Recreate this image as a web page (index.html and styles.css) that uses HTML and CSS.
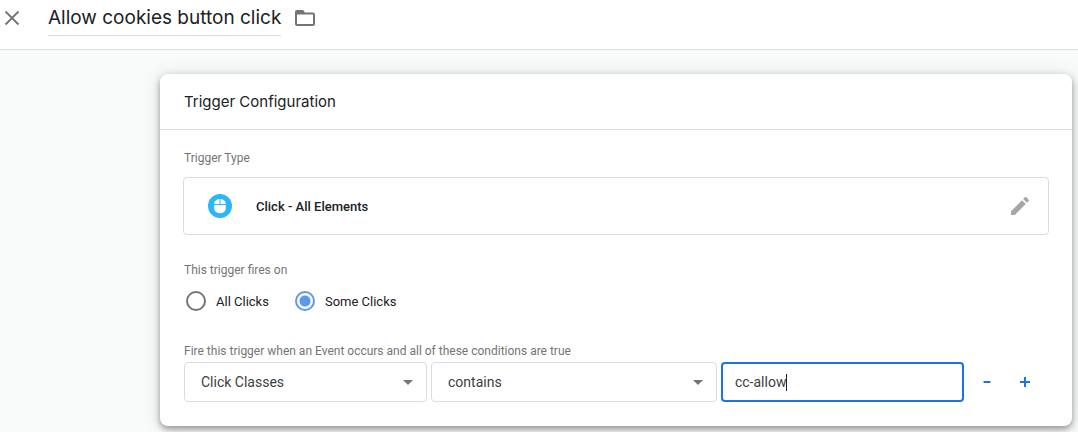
FILE: index.html
```
<!DOCTYPE html>
<html lang="en">
<head>
  <meta charset="UTF-8" />
  <title>Allow cookies button click</title>
  <link rel="stylesheet" href="styles.css">
</head>
<body>

  <header class="topbar">
    <button class="iconButton" aria-label="Close">
      <svg width="16" height="16" viewBox="0 0 16 16"><path d="M1.5 1.5l13 13M14.5 1.5l-13 13" fill="none" stroke="#757575" stroke-width="1.8"/></svg>
    </button>
    <h1>Allow cookies button click</h1>
    <button class="iconButton" aria-label="Folder">
      <svg width="24" height="24" viewBox="0 0 24 24"><path fill="#757575" d="M4 4h6l2 2.500h8c1.100 0 2 .9 2 2V18c0 1.100-.9 2-2 2H4c-1.100 0-2-.9-2-2V6c0-1.100.9-2 2-2zM4 8.500V18h16V8.500z"/></svg>
    </button>
  </header>

  <main>
    <form class="card">
      <h2>Trigger Configuration</h2>
      <div class="cardBody">
        <p class="label">Trigger Type</p>
        <div class="typeBox">
          <svg width="24" height="24" viewBox="0 0 24 24">
            <circle cx="12" cy="12" r="12" fill="#29b6fc"/>
            <path fill="#fff" d="M11.500 5v5H6.200C6.200 7 8.400 5.200 11.500 5zM12.500 5v5h5.300c0-3-2.200-4.800-5.300-5zM6.200 11h11.600v3.200a5 5 0 0 1-5 5h-1.600a5 5 0 0 1-5-5z"/>
          </svg>
          <span class="typeName">Click - All Elements</span>
          <button type="button" class="iconButton" aria-label="Edit">
            <svg width="24" height="24" viewBox="0 0 24 24"><path fill="#a6a6a6" d="M3 17.250V21h3.750L17.810 9.940l-3.750-3.750L3 17.250zM20.710 7.040c.39-.39.39-1.020 0-1.410l-2.340-2.340c-.39-.39-1.020-.39-1.410 0l-1.830 1.830 3.750 3.750 1.830-1.830z"/></svg>
          </button>
        </div>

        <fieldset>
          <legend class="label">This trigger fires on</legend>
          <div class="radios">
            <label><input type="radio" name="fires" value="all">All Clicks</label>
            <label><input type="radio" name="fires" value="some" checked>Some Clicks</label>
          </div>
        </fieldset>

        <p class="label">Fire this trigger when an Event occurs and all of these conditions are true</p>
        <div class="conditions">
          <select aria-label="Variable"><option>Click Classes</option></select>
          <select aria-label="Operator"><option>contains</option></select>
          <div class="valueBox">
            <input type="text" aria-label="Value" value="cc-allow">
            <span class="caret"></span>
          </div>
          <div class="actions">
            <button type="button" aria-label="Remove condition">
              <svg width="10" height="10" viewBox="0 0 10 10"><path d="M1.500 5h7" stroke="#1a73e8" stroke-width="2"/></svg>
            </button>
            <button type="button" aria-label="Add condition">
              <svg width="10" height="10" viewBox="0 0 10 10"><path d="M0 5h10M5 0v10" stroke="#1a73e8" stroke-width="2"/></svg>
            </button>
          </div>
        </div>
      </div>
    </form>
  </main>

</body>
</html>
```
FILE: styles.css
```
* {
  box-sizing: border-box;
}

body {
  margin: 0;
  min-height: 100vh;
  background-color: #f9fafa;
  font-family: Roboto, sans-serif;
  font-size: 13px;
  color: #202124;
}

h1, h2, p {
  margin: 0;
  font-weight: normal;
}

.topbar {
  display: flex;
  align-items: flex-start;
  height: 50px;
  padding: 0 4px;
  background-color: #fff;
  border-bottom: 1px solid #dadce0;
}

.topbar .iconButton {
  height: 36px;
}

h1 {
  height: 36px;
  margin: 0 12px 0 28px;
  border-bottom: 1px solid #dadce0;
  font-family: Inter, sans-serif;
  font-size: 19px;
  line-height: 36px;
}

.iconButton {
  display: flex;
  align-items: center;
  justify-content: center;
  padding: 0;
  border: none;
  background: none;
  cursor: pointer;
}

main {
  padding: 24px 6px 6px 160px;
}

.card {
  background-color: #fff;
  border-radius: 8px;
  box-shadow: 0 3px 6px rgba(60,64,67,0.5), 0 1px 18px rgba(60,64,67,0.15);
}

h2 {
  padding: 0 24px;
  border-bottom: 1px solid #dadce0;
  font-family: Inter, sans-serif;
  font-size: 15px;
  line-height: 55px;
}

.cardBody {
  padding: 20px 24px 24px;
}

.label {
  padding: 0;
  font-size: 12px;
  line-height: 16px;
  color: #757575;
}

.typeBox {
  display: flex;
  align-items: center;
  height: 58px;
  margin: 11px -1px 27px;
  padding: 0 16px 0 24px;
  border: 1px solid #dadce0;
  border-radius: 4px;
}

.typeName {
  flex: 1;
  margin-left: 24px;
  font-weight: 500;
}

fieldset {
  margin: 0;
  padding: 0;
  border: none;
}

.radios {
  display: flex;
  gap: 26px;
  padding: 13px 0 32px 2px;
}

.radios label {
  display: flex;
  align-items: center;
  gap: 10px;
}

.radios input {
  appearance: none;
  width: 20px;
  height: 20px;
  margin: 0;
  border: 2px solid #757575;
  border-radius: 50%;
}

.radios input:checked {
  border-color: #5b97f8;
  background: radial-gradient(circle, #5b97f8 5px, #fff 6px);
}

.conditions {
  display: grid;
  grid-template-columns: 17fr 20fr 17fr 80px;
  gap: 4px;
  margin-top: 3px;
}

select, .valueBox input {
  width: 100%;
  height: 40px;
  border-radius: 4px;
  background-color: #fff;
  font-family: Roboto, sans-serif;
  font-size: 14px;
  color: #3c4043;
}

select {
  appearance: none;
  padding: 0 16px;
  border: 1px solid #dadce0;
  background-image: url("data:image/svg+xml,%3Csvg xmlns='http://www.w3.org/2000/svg' width='10' height='5'%3E%3Cpath d='M0 0h10L5 5z' fill='%23757575'/%3E%3C/svg%3E");
  background-repeat: no-repeat;
  background-position: right 13px center;
}

.valueBox {
  position: relative;
}

.valueBox input {
  padding: 0 12px;
  border: 2px solid #1a73e8;
  outline: none;
}

.caret {
  position: absolute;
  top: 12px;
  left: 65px;
  width: 1px;
  height: 17px;
  background-color: #202124;
}

.actions {
  display: flex;
  padding-right: 4px;
}

.actions button {
  flex: 1;
  padding: 0;
  border: none;
  background: none;
  cursor: pointer;
}
```
